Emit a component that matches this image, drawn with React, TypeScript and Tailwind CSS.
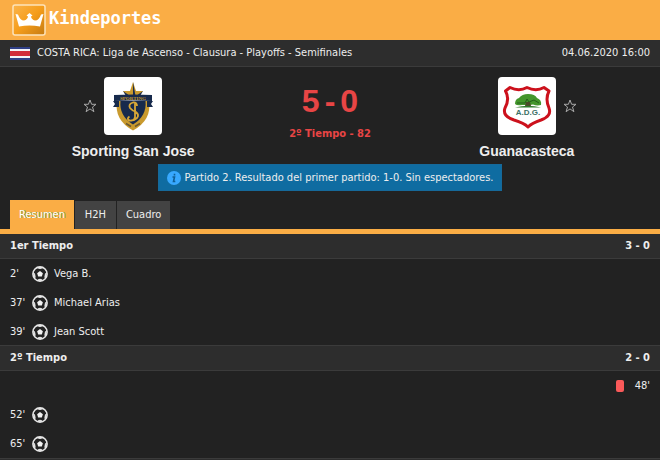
import React from "react";

function CrownLogo() {
  return (
    <svg width="34" height="32" viewBox="0 0 34 32" aria-hidden="true">
      <defs>
        <linearGradient id="crown" x1="0" y1="0" x2="1" y2="1">
          <stop offset="0" stopColor="#fbb44c" />
          <stop offset="0.5" stopColor="#f59d1b" />
          <stop offset="1" stopColor="#c47a12" />
        </linearGradient>
      </defs>
      <rect x="1" y="1" width="32" height="30" rx="2" fill="url(#crown)" stroke="#fde3bb" strokeWidth="1.500" />
      <path d="M3.500 10 L6 10.500 Q8 16.500 12 16.500 Q15.500 15.500 16 12.500 L14.500 11.500 L17.500 9 L20.500 11.500 L19 12.500 Q19.500 15.500 23 16.500 Q27 16.500 29 10.500 L31.500 10 L28 22.500 Q17.500 20.500 7 22.500 Z" fill="#fff" />
    </svg>
  );
}

function CostaRicaFlag() {
  return (
    <svg width="20" height="13" viewBox="0 0 20 13" role="img" aria-label="Costa Rica">
      <rect width="20" height="13" fill="#2f3f85" />
      <rect y="2" width="20" height="9" fill="#f3f3f8" />
      <rect y="4" width="20" height="5" fill="#d22b3a" />
    </svg>
  );
}

function StarButton({ team }: { team: string }) {
  return (
    <button type="button" aria-label={`Favorito: ${team}`} className="flex w-4 justify-center">
      <svg width="14" height="14" viewBox="0 0 14 14" fill="none" stroke="#a8a8a8">
        <path d="M7 1 L8.600 5.300 H13 L9.500 8 L10.900 12.700 L7 9.900 L3.100 12.700 L4.500 8 L1 5.300 H5.400 Z" />
      </svg>
    </button>
  );
}

function SportingCrest() {
  return (
    <svg width="58" height="58" viewBox="0 0 58 58" role="img" aria-label="Sporting San Jose">
      <path d="M29 5 L32 14 L39 14 L35 19 H23 L19 14 L26 14 Z" fill="#c99a2e" />
      <path d="M29 5 L31.500 19 H29 Z M19 14 L26 19 H22 Z M39 14 L32 19 H36 Z" fill="#1c2c4c" />
      <path d="M13 24 H45 Q48 43 29 53.500 Q10 43 13 24 Z" fill="#c99a2e" />
      <path d="M16.500 24 H41.500 Q43 39 29 47.500 Q15 39 16.500 24 Z" fill="#172a4c" />
      <path d="M9 24 H15 V30 H9 L11 27 Z M49 24 H43 V30 H49 L47 27 Z" fill="#172a4c" />
      <path d="M10 18 Q29 17 48 18 V24 Q29 23 10 24 Z" fill="#172a4c" />
      <text x="29" y="23" textAnchor="middle" fontSize="5" fontWeight="700" fill="#c99a2e" fontFamily="Liberation Serif, serif">SPORTING</text>
      <path d="M33 29 Q33 25 29 25.500 Q24 27 26 31 Q28 33.500 32 35 Q35.500 38 33 41 Q30 44 25 43.500 Q22.500 41.500 25.500 39.500 M31 26 V40 Q30 45 25 43" fill="none" stroke="#d6a637" strokeWidth="1.800" />
      <path d="M22 46.500 L27 49.500 M36 46.500 L31 49.500" stroke="#6d5a30" strokeWidth="1.500" />
    </svg>
  );
}

function GuanacastecaCrest() {
  return (
    <svg width="58" height="58" viewBox="0 0 58 58" role="img" aria-label="Guanacasteca">
      <path d="M7.500 14 L12 10.500 Q21 15 29 10.500 Q38 15 46 10.500 L51 14 Q47 22 51 31 Q54 39 43 43 Q34 46 30 50 Q26 46 16 43 Q4 39 7 31 Q12 22 7.500 14 Z" fill="#fff" stroke="#cc111c" strokeWidth="3" strokeLinejoin="round" />
      <path d="M17 27 Q17 22 21 21 Q24 17 30 17 Q37 17 39 21 Q44 23 43 28 Q39 29 35 27.500 L32 28 H28 L24 28 Q19 29 17 27 Z" fill="#43962c" />
      <path d="M19 26 H27 L29 22 L31 25 L36 23 L41 26" fill="none" stroke="#24601c" />
      <path d="M28 25 H32 L33 29 H27 Z" fill="#4b4a2a" />
      <path d="M17 30.500 Q30 27 43 30.500 Z" fill="#2f7a2c" />
      <text x="30" y="37.500" textAnchor="middle" fontSize="8" fontWeight="700" fill="#3c6f66" fontFamily="Liberation Sans, sans-serif">A.D.G.</text>
    </svg>
  );
}

function Ball() {
  return (
    <svg width="16" height="16" viewBox="0 0 16 16" role="img" aria-label="Gol">
      <circle cx="8" cy="8" r="7.100" fill="#222222" stroke="#e6e6e6" strokeWidth="1.600" />
      <path d="M8 5.100 L10.900 7.200 L9.800 10.500 H6.200 L5.100 7.200 Z" fill="#f2f2f2" />
      <path d="M5.200 1.600 Q8 3.400 10.800 1.600 Z M14.500 6.500 Q12.600 8.500 13 11.500 Z M1.500 6.500 Q3.400 8.500 3 11.500 Z M5.500 14.300 Q8 12 10.500 14.300 Z" fill="#e6e6e6" stroke="#e6e6e6" />
    </svg>
  );
}

type MatchEvent = { minute: string; player?: string; kind: "goal" | "red"; away?: boolean };

function EventRow({ minute, player, kind, away }: MatchEvent) {
  return (
    <li className={away ? "flex h-[29px] flex-row-reverse items-center px-2.5" : "flex h-[29px] items-center px-2.5"}>
      <span className={away ? "w-6 text-right" : "w-[22px]"}>{minute}</span>
      {kind === "goal" ? <Ball /> : <span role="img" aria-label="Tarjeta roja" className="mr-0.5 h-3 w-2 rounded-xs bg-[#fa5a5a]" />}
      {player && <span className="ml-1.5">{player}</span>}
    </li>
  );
}

function Period({ title, score, events }: { title: string; score: string; events: MatchEvent[] }) {
  return (
    <section>
      <h2 className="-mt-px flex h-[26px] items-center justify-between border-y border-[#3b3b3b] bg-[#2d2d2d] px-2.5 font-bold">
        <span>{title}</span>
        <span>{score}</span>
      </h2>
      <ul>
        {events.map((e) => <EventRow key={e.minute} {...e} />)}
      </ul>
    </section>
  );
}

const firstHalf: MatchEvent[] = [
  { minute: "2'", player: "Vega B.", kind: "goal" },
  { minute: "37'", player: "Michael Arias", kind: "goal" },
  { minute: "39'", player: "Jean Scott", kind: "goal" },
];
const secondHalf: MatchEvent[] = [
  { minute: "48'", kind: "red", away: true },
  { minute: "52'", kind: "goal" },
  { minute: "65'", kind: "goal" },
];

export default function App() {
  return (
    <div className="min-h-screen bg-[#222222] font-['DejaVu_Sans_Condensed','DejaVu_Sans',sans-serif] text-[11px] leading-4 text-[#eeeeee]">
      <header className="flex h-10 items-center bg-[#faad45] pl-3">
        <CrownLogo />
        <h1 className="mb-1 ml-[3px] font-['DejaVu_Sans_Mono',monospace] text-[17px] leading-5 font-bold text-white">Kindeportes</h1>
      </header>
      <div className="flex h-[27px] items-center border-b border-[#3b3b3b] bg-[#2d2d2d] px-2.5">
        <CostaRicaFlag />
        <span className="ml-[7px] flex-1">COSTA RICA: Liga de Ascenso - Clausura - Playoffs - Semifinales</span>
        <time>04.06.2020 16:00</time>
      </div>
      <div className="grid grid-cols-[2fr_1fr_2fr] px-0.5 pt-2.5">
        <div className="flex flex-col items-center">
          <div className="flex items-center gap-1.5">
            <StarButton team="Sporting San Jose" />
            <div className="rounded-sm bg-white"><SportingCrest /></div>
            <span className="w-4" />
          </div>
          <h2 className="mt-2 font-['Liberation_Sans',sans-serif] text-[14px] leading-4 font-bold">Sporting San Jose</h2>
        </div>
        <div className="flex flex-col items-center font-bold text-[#e84545]">
          <p className="mt-1 flex gap-[5px] font-['Liberation_Sans',sans-serif] text-[32px] leading-10"><span>5</span><span>-</span><span>0</span></p>
          <p className="mt-[5px]">2º Tiempo - 82</p>
        </div>
        <div className="flex flex-col items-center">
          <div className="flex items-center gap-1.5">
            <span className="w-4" />
            <div className="rounded-sm bg-white"><GuanacastecaCrest /></div>
            <StarButton team="Guanacasteca" />
          </div>
          <h2 className="mt-2 font-['Liberation_Sans',sans-serif] text-[14px] leading-4 font-bold">Guanacasteca</h2>
        </div>
      </div>
      <div className="mt-[5px] flex justify-center">
        <p className="flex h-[27px] items-center gap-1 border border-[#16699a] bg-[#0f6ca1] px-2">
          <svg width="14" height="14" viewBox="0 0 14 14" aria-hidden="true">
            <circle cx="7" cy="7" r="7" fill="#38a9ff" />
            <path d="M5.500 6 H7.500 L6.500 10.500 H8.300 M7.500 2.800 V4.400" fill="none" stroke="#0f5f95" strokeWidth="1.600" />
          </svg>
          Partido 2. Resultado del primer partido: 1-0. Sin espectadores.
        </p>
      </div>
      <nav className="relative mt-[9px] flex items-end gap-px border-b-[5px] border-[#faad45] px-2.5">
        <button type="button" className="h-[29px] bg-[#faad45] px-[9px] text-white [text-shadow:1px_0_0_#6f9a3a]">Resumen</button>
        <button type="button" className="h-7 min-w-[41px] bg-[#434343] px-[9px]">H2H</button>
        <button type="button" className="h-7 bg-[#434343] px-[9px]">Cuadro</button>
      </nav>
      <main>
        <Period title="1er Tiempo" score="3 - 0" events={firstHalf} />
        <Period title="2º Tiempo" score="2 - 0" events={secondHalf} />
        <div className="h-2 border-t border-[#3b3b3b] bg-[#2d2d2d]" />
      </main>
    </div>
  );
}
